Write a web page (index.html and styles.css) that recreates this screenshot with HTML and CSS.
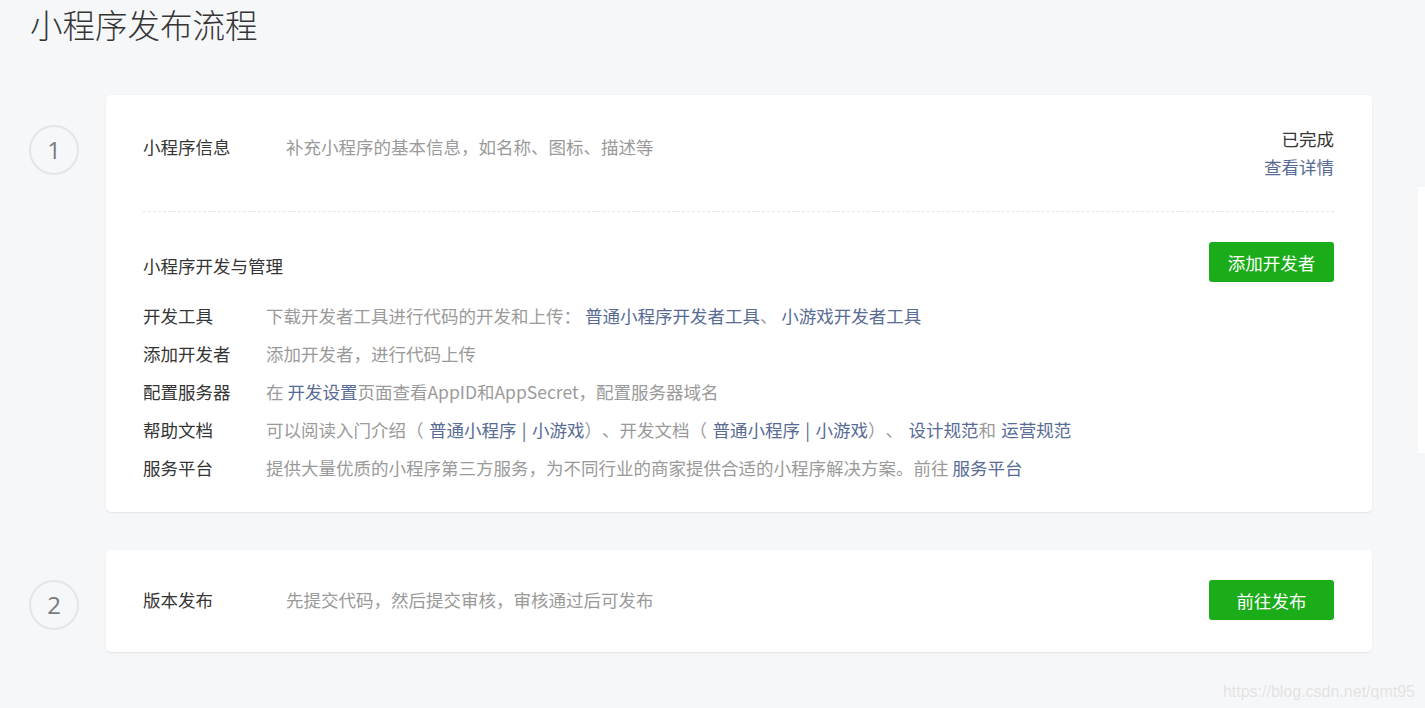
FILE: index.html
```html
<!DOCTYPE html>
<html lang="zh-CN">
<head>
<meta charset="utf-8">
<title>小程序发布流程</title>
<link rel="stylesheet" href="styles.css">
</head>
<body>
<div class="page">
  <h1 class="page-title">小程序发布流程</h1>
  <div class="steps">
    <div class="step">
      <div class="step-num">1</div>
      <div class="card">
        <div class="info-row">
          <div class="info-label">小程序信息</div>
          <div class="info-desc">补充小程序的基本信息，如名称、图标、描述等</div>
          <div class="info-status">
            <div class="status-done">已完成</div>
            <a class="link">查看详情</a>
          </div>
        </div>
        <div class="divider"></div>
        <div class="sub-head">
          <div class="sub-title">小程序开发与管理</div>
          <button class="btn">添加开发者</button>
        </div>
        <ul class="items">
          <li class="item"><span class="item-label">开发工具</span><span class="item-desc">下载开发者工具进行代码的开发和上传：&nbsp;<a class="link">普通小程序开发者工具</a>、&nbsp;<a class="link">小游戏开发者工具</a></span></li>
          <li class="item"><span class="item-label">添加开发者</span><span class="item-desc">添加开发者，进行代码上传</span></li>
          <li class="item"><span class="item-label">配置服务器</span><span class="item-desc">在 <a class="link">开发设置</a>页面查看AppID和AppSecret，配置服务器域名</span></li>
          <li class="item"><span class="item-label">帮助文档</span><span class="item-desc item-desc-spaced">可以阅读入门介绍（ <a class="link">普通小程序</a> <a class="link">|</a> <a class="link">小游戏</a>）、开发文档（ <a class="link">普通小程序</a> <a class="link">|</a> <a class="link">小游戏</a>）、 <a class="link">设计规范</a>和 <a class="link">运营规范</a></span></li>
          <li class="item"><span class="item-label">服务平台</span><span class="item-desc">提供大量优质的小程序第三方服务，为不同行业的商家提供合适的小程序解决方案。前往 <a class="link">服务平台</a></span></li>
        </ul>
      </div>
    </div>
    <div class="step">
      <div class="step-num">2</div>
      <div class="card card-compact">
        <div class="release-row">
          <div class="info-label">版本发布</div>
          <div class="info-desc">先提交代码，然后提交审核，审核通过后可发布</div>
          <button class="btn">前往发布</button>
        </div>
      </div>
    </div>
  </div>
</div>
<div class="edge-panel"></div>
<div class="watermark">https://blog.csdn.net/qmt95</div>
</body>
</html>
```

FILE: styles.css
```css
html, body {
  margin: 0;
  padding: 0;
  background: #f6f7f9;
}
body {
  font-family: "Noto Sans CJK SC", "Noto Sans", sans-serif;
  font-size: 17.5px;
  color: #353535;
  width: 1425px;
  height: 708px;
  overflow: hidden;
  position: relative;
  text-spacing-trim: space-all;
}
.page {
  padding: 0 53px 0 29px;
}
.page-title {
  margin: 0;
  padding: 0 0 0 1px;
  font-size: 32.5px;
  font-weight: 300;
  line-height: 48px;
  height: 95px;
  color: #353535;
}
.steps {
  display: flex;
  flex-direction: column;
  gap: 38px;
}
.step {
  display: flex;
  align-items: flex-start;
  gap: 27px;
}
.step-num {
  flex: none;
  box-sizing: border-box;
  width: 50px;
  height: 50px;
  margin-top: 30px;
  border: 2.5px solid #e4e5e7;
  border-radius: 50%;
  display: flex;
  align-items: center;
  justify-content: center;
  font-family: "Open Sans", "Noto Sans", sans-serif;
  font-size: 24px;
  color: #7a7a7a;
  line-height: 1;
}
.card {
  flex: 1;
  background: #fff;
  border-radius: 5px;
  box-shadow: 0 1px 2px rgba(0, 0, 0, 0.08);
  padding: 30px 38px 25px 37px;
}
.card-compact {
  padding: 30px 38px 32px 37px;
}
.info-row {
  display: flex;
  align-items: flex-start;
}
.info-label {
  flex: none;
  width: 143px;
  line-height: 28px;
  margin-top: 8px;
}
.info-desc {
  flex: 1;
  color: #9a9a9a;
  line-height: 28px;
  margin-top: 8px;
}
.info-status {
  text-align: right;
  line-height: 28px;
}
.status-done {
  color: #353535;
}
.link {
  color: #576b95;
  text-decoration: none;
}
.divider {
  border-top: 1px dashed #e6e6e6;
  margin: 30px 0 30px;
}
.sub-head {
  display: flex;
  align-items: center;
  justify-content: space-between;
}
.sub-title {
  padding-top: 6px;
}
.btn {
  width: 125px;
  height: 40px;
  border: 0;
  border-radius: 3px;
  background: #1aad19;
  color: #fff;
  font-family: inherit;
  font-size: 17.5px;
  padding: 0;
  cursor: pointer;
}
.items {
  list-style: none;
  margin: 15px 0 0;
  padding: 0;
}
.item {
  display: flex;
  line-height: 38px;
}
.item-label {
  flex: none;
  width: 123px;
}
.item-desc {
  color: #9a9a9a;
}
.item-desc-spaced {
  word-spacing: 1.5px;
}
.release-row {
  display: flex;
  align-items: center;
}
.release-row .info-label,
.release-row .info-desc {
  margin-top: 0;
}
.edge-panel {
  position: absolute;
  right: 0;
  top: 187px;
  width: 7px;
  height: 266px;
  background: #fff;
}
.watermark {
  position: absolute;
  right: 10px;
  bottom: 7px;
  font-family: "Liberation Sans", Arial, sans-serif;
  font-size: 16px;
  color: #e2e2e2;
  text-shadow: 0 0 1px #fff;
}
```
